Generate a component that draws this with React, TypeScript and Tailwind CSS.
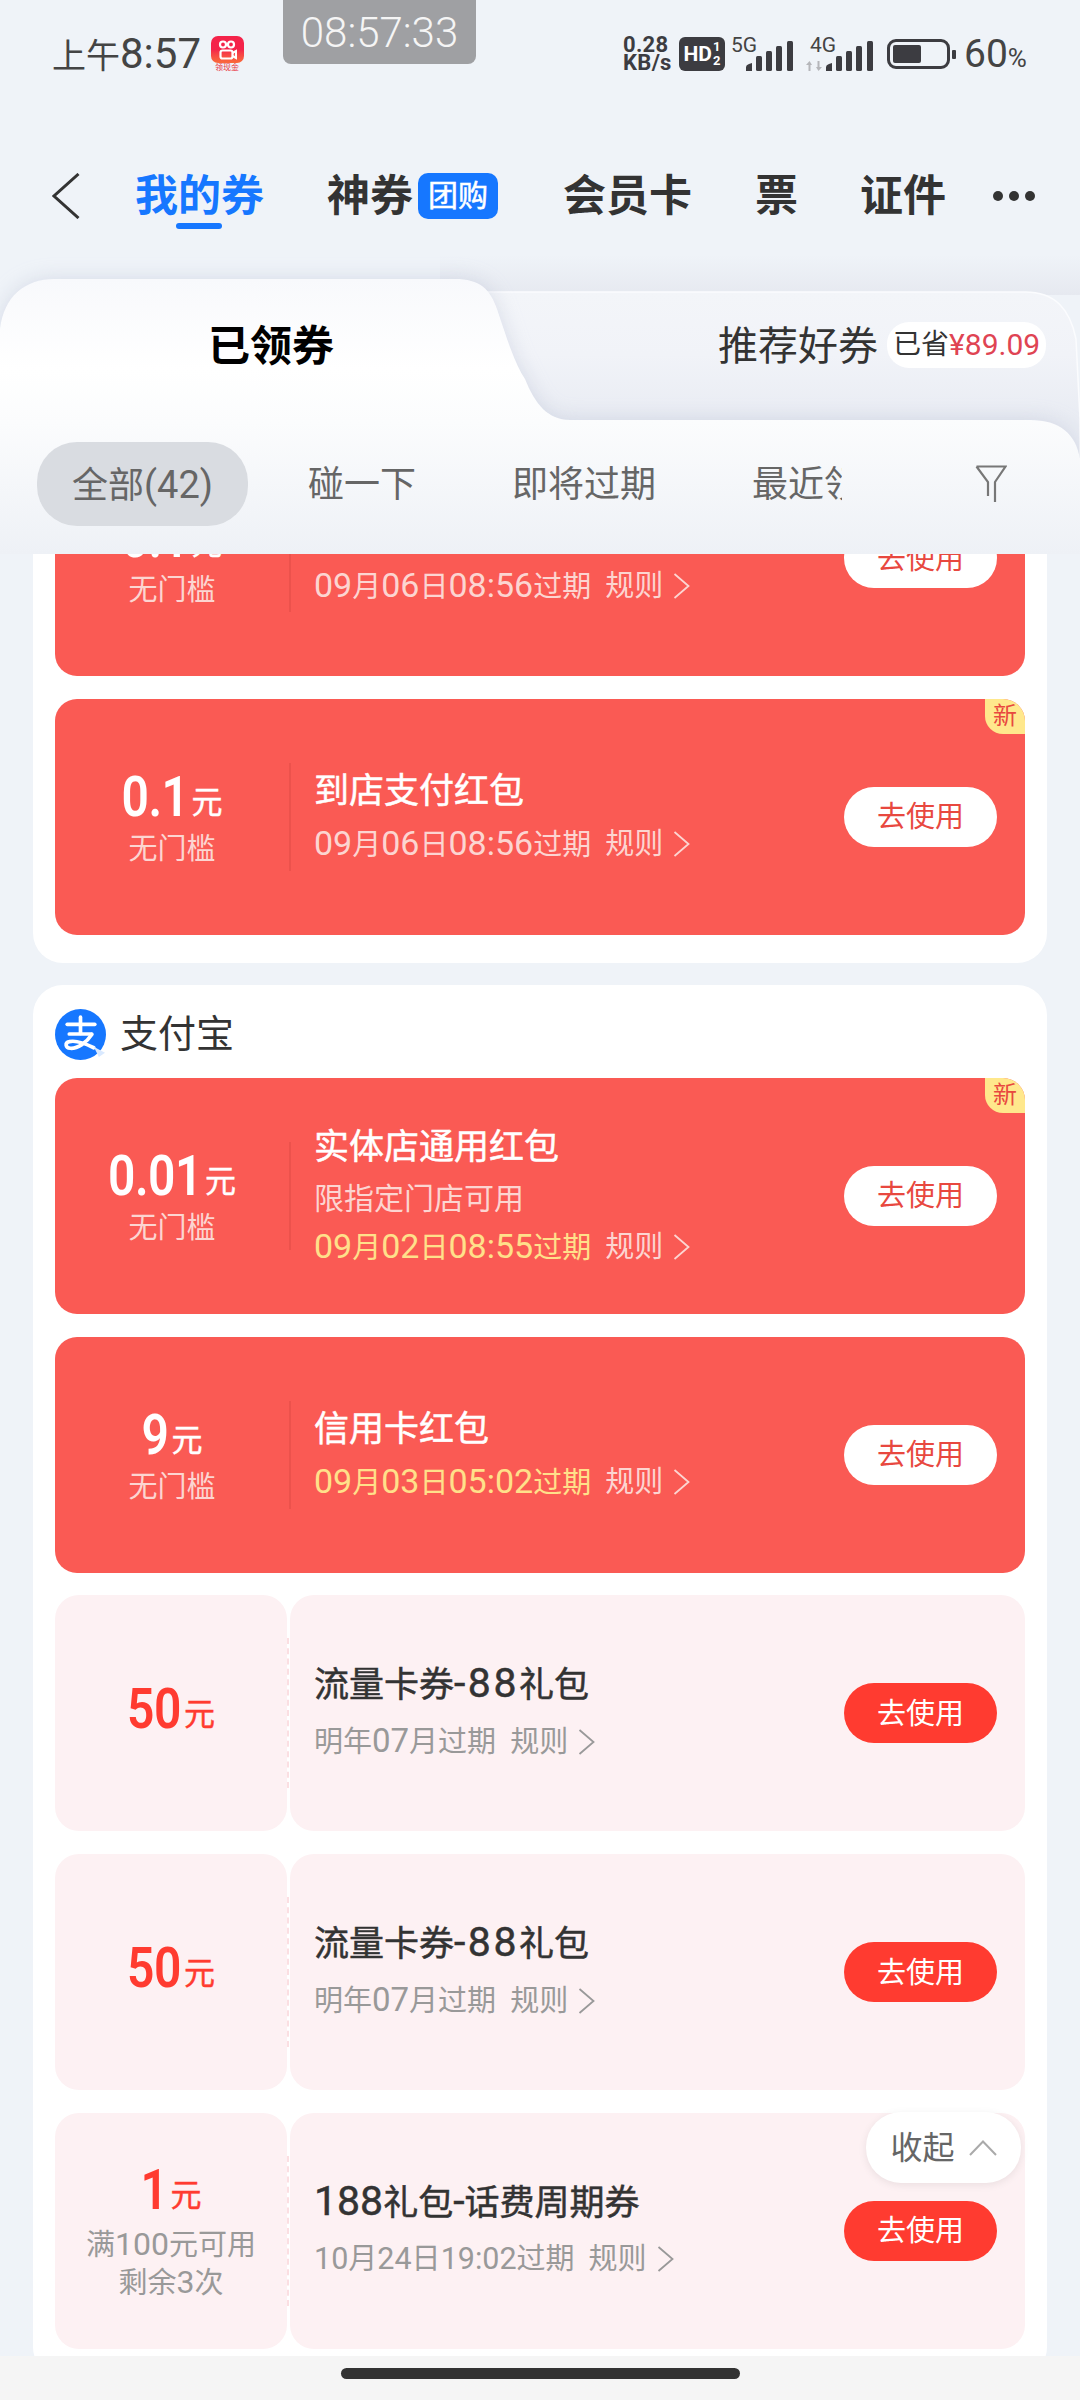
import React from "react";

type Coupon = {
  amount: string;
  sub?: string[];
  title: string;
  note?: string;
  date: string;
  isNew?: boolean;
  highlight?: boolean;
  titleDigits?: string;
  dateDigits?: string;
};

// digits in the reference run about 1.2x the size of the Chinese next to them
function Mixed({ text, digitClass }: { text: string; digitClass: string }) {
  const parts = text.split(/([0-9:.\-()¥]+)/);
  return (
    <>
      {parts.map((part, i) =>
        i % 2 === 1 ? (
          <span key={i} className={digitClass}>
            {part}
          </span>
        ) : (
          part
        )
      )}
    </>
  );
}

function Chevron({ className }: { className?: string }) {
  return (
    <svg viewBox="0 0 17 26" className={className} fill="none" stroke="currentColor" strokeWidth="1.8">
      <path d="M1.5 1 L15.5 13 L1.5 25" />
    </svg>
  );
}

function SignalBars({ className }: { className?: string }) {
  return (
    <svg viewBox="0 0 47 30" className={className} fill="#3c3c41">
      <path d="M0 30 V26 Q0 24 3 23 L6 22 V30 Z" />
      <rect x="10" y="15" width="6" height="15" rx="1.5" />
      <rect x="20" y="10" width="6" height="20" rx="1.5" />
      <rect x="30" y="5" width="6" height="25" rx="1.5" />
      <rect x="41" y="0" width="6" height="30" rx="1.5" />
    </svg>
  );
}

function AppBadge() {
  return (
    <div className="ml-[8px] w-[34px] flex flex-col items-center">
      <div className="w-[33px] h-[27px] rounded-[7px] bg-gradient-to-b from-[#f4234a] via-[#f4234a] to-[#fa6a3a] flex items-center justify-center">
        <svg viewBox="0 0 20 20" className="w-[20px] h-[22px]" fill="none" stroke="#fff" strokeWidth="2.2">
          <circle cx="6" cy="4.5" r="3" />
          <circle cx="14" cy="4.5" r="3" />
          <rect x="3.5" y="10.5" width="12" height="8" rx="2" />
          <path d="M15.5 13 L19 11 V18 L15.5 16" />
        </svg>
      </div>
      <span className="mt-[1px] h-[8px] text-[8px] leading-[8px] text-[#e8323c] whitespace-nowrap">领现金</span>
    </div>
  );
}

function StatusBar() {
  return (
    <div className="h-[108px] flex items-center pl-[52px] text-[#444]">
      <span className="text-[34px] leading-none w-[150px] whitespace-nowrap">
        <Mixed text="上午8:57" digitClass="text-[42px]" />
      </span>
      <AppBadge />
      <div className="ml-[379px] w-[50px] text-[22px] leading-[18px] font-bold text-[#3c3c41] flex flex-col tracking-[0.3px]">
        <span>0.28</span>
        <span>KB/s</span>
      </div>
      <div className="ml-[6px] w-[46px] h-[34px] rounded-[6px] bg-[#3c3c41] text-white flex items-center justify-center font-bold">
        <span className="text-[21px] leading-none">HD</span>
        <span className="flex flex-col text-[13px] leading-[14px] ml-[1px]">
          <span>1</span>
          <span>2</span>
        </span>
      </div>
      <div className="ml-[6px] w-[62px] h-[34px] relative">
        <span className="absolute left-0 top-0 text-[21px] leading-[16px]">5G</span>
        <SignalBars className="absolute right-0 bottom-0 w-[47px] h-[30px]" />
      </div>
      <div className="ml-[13px] w-[67px] h-[34px] relative">
        <span className="absolute left-[4px] top-0 text-[21px] leading-[16px]">4G</span>
        <svg viewBox="0 0 16 10" className="absolute left-0 bottom-0 w-[16px] h-[10px]" fill="#b5b6ba">
          <path d="M0 4 L3.5 0 L6 4 H4.5 V10 H2.5 V4 Z" />
          <path d="M10 6 L12.5 10 L16 6 H13.5 V0 H11.5 V6 Z" />
        </svg>
        <SignalBars className="absolute right-0 bottom-0 w-[47px] h-[30px]" />
      </div>
      <div className="ml-[14px] w-[63px] h-[30px] border-[3px] border-[#3c3c41] rounded-[9px] p-[3px] flex">
        <div className="w-[28px] bg-[#3c3c41] rounded-[2px]" />
      </div>
      <div className="ml-[2px] w-[4px] h-[9px] bg-[#3c3c41] rounded-[1px]" />
      <span className="ml-[8px] text-[39px] leading-none whitespace-nowrap">
        60<span className="text-[26px]">%</span>
      </span>
    </div>
  );
}

function NavBar() {
  return (
    <div className="h-[56px] mt-[60px] mb-[55px] flex items-center text-[43px] leading-none font-bold text-[#333] whitespace-nowrap">
      <svg viewBox="0 0 28 46" className="ml-[52px] w-[28px] h-[46px]" fill="none" stroke="#333" strokeWidth="3">
        <path d="M26.5 1 L2 23 L26.5 45" />
      </svg>
      <div className="ml-[55px] w-[129px] relative text-[#1677ff]">
        我的券
        <div className="absolute left-[41px] top-[48px] w-[46px] h-[6px] rounded-[3px] bg-[#1677ff]" />
      </div>
      <span className="ml-[63px] w-[86px]">神券</span>
      <span className="ml-[5px] w-[80px] h-[46px] rounded-[10px] bg-[#1677ff] text-white text-[30px] font-normal [-webkit-text-stroke:0.5px_#fff] flex items-center justify-center">团购</span>
      <span className="ml-[65px] w-[129px]">会员卡</span>
      <span className="ml-[63px] w-[43px]">票</span>
      <span className="ml-[62px] w-[86px]">证件</span>
      <div className="ml-[47px] flex gap-[6px]">
        <div className="w-[10px] h-[10px] rounded-full bg-[#333]" />
        <div className="w-[10px] h-[10px] rounded-full bg-[#333]" />
        <div className="w-[10px] h-[10px] rounded-full bg-[#333]" />
      </div>
    </div>
  );
}

function TabPanel() {
  return (
    <div className="relative h-[275px] shrink-0">
      <svg viewBox="0 -24 1080 299" className="absolute left-0 -top-[24px] w-[1080px] h-[299px]">
        <defs>
          <linearGradient id="topShade" x1="0" y1="0" x2="0" y2="1">
            <stop offset="0" stopColor="#eff3f8" />
            <stop offset="1" stopColor="#e6e9f0" />
          </linearGradient>
          <linearGradient id="rightTab" x1="0" y1="0" x2="0" y2="1">
            <stop offset="0" stopColor="#f3f5f9" />
            <stop offset="0.24" stopColor="#f1f3f8" />
            <stop offset="0.48" stopColor="#e9ecf3" />
          </linearGradient>
          <linearGradient id="leftTab" x1="0" y1="0" x2="0" y2="1">
            <stop offset="0" stopColor="#f8f9fc" />
            <stop offset="0.33" stopColor="#ffffff" />
            <stop offset="0.52" stopColor="#fbfcfd" />
            <stop offset="1" stopColor="#eef1f6" />
          </linearGradient>
        </defs>
        <rect x="440" y="-24" width="640" height="40" fill="url(#topShade)" />
        <path
          d="M450 13 L1025 13 C1055 13 1070 30 1076 60 L1080 140 L1080 275 L450 275 Z"
          fill="url(#rightTab)"
          stroke="#fbfcfe"
          strokeWidth="1.5"
        />
        <path
          className="drop-shadow-[0_0_10px_rgba(165,175,200,0.35)]"
          d="M0 50 C4 18 24 0 55 0 L455 0 C480 0 490 10 497 30 C507 60 515 85 525 100 C535 125 548 141 570 141 L1030 141 C1060 141 1076 155 1080 180 L1080 275 L0 275 Z"
          fill="url(#leftTab)"
        />
      </svg>
      <div className="relative h-[132px] flex items-center">
        <span className="ml-[208px] w-[510px] pt-[3px] text-[42px] leading-none font-bold text-black">已领券</span>
        <span className="pt-[3px] text-[40px] leading-none text-[#333] whitespace-nowrap">推荐好券</span>
        <div className="ml-[9px] w-[159px] h-[46px] rounded-[22px] bg-white flex items-center pl-[6px] whitespace-nowrap">
          <span className="text-[28px] leading-none text-[#333]">已省</span>
          <span className="text-[30px] leading-none text-[#df4453]">¥89.09</span>
        </div>
      </div>
      <div className="relative mt-[31px] h-[84px] flex items-center text-[36px] leading-none text-[#666] whitespace-nowrap">
        <div className="ml-[37px] w-[805px] overflow-hidden flex items-center">
          <div className="w-[211px] h-[84px] pt-[2px] rounded-[40px] bg-[#d9dce1] flex items-center justify-center shrink-0">
            <span>
              <Mixed text="全部(42)" digitClass="text-[38px]" />
            </span>
          </div>
          <span className="ml-[60px] pt-[2px] shrink-0">碰一下</span>
          <span className="ml-[96px] pt-[2px] shrink-0">即将过期</span>
          <span className="ml-[96px] pt-[2px] shrink-0">最近领取</span>
        </div>
        <svg viewBox="0 0 32 38" className="ml-[133px] w-[32px] h-[38px]" fill="none" stroke="#777" strokeWidth="2.2">
          <path d="M1.5 1.5 H30.5 L20 17 V37 M1.5 1.5 L13 17 V31" />
        </svg>
      </div>
    </div>
  );
}

function UseButton({ light }: { light: boolean }) {
  return (
    <div
      className={
        light
          ? "w-[153px] h-[60px] pt-[2px] rounded-[30px] bg-white text-[#e8483f] text-[29px] leading-none flex items-center justify-center shrink-0"
          : "w-[153px] h-[60px] pt-[2px] rounded-[30px] bg-[#ff3b30] text-white text-[29px] leading-none flex items-center justify-center shrink-0"
      }
    >
      去使用
    </div>
  );
}

function Amount({ value, className }: { value: string; className: string }) {
  return (
    <div className={className}>
      <span className="inline-block scale-y-[1.16] font-semibold text-[48px] leading-[56px] tracking-[-0.5px]">{value}</span>
      <span className="ml-[3px] text-[31px] [-webkit-text-stroke:0.4px_currentColor]">元</span>
    </div>
  );
}

function RedCoupon({ coupon }: { coupon: Coupon }) {
  return (
    <div className="relative h-[236px] rounded-[22px] bg-[#fa5a54] flex items-center overflow-hidden">
      {coupon.isNew && (
        <div className="absolute right-0 top-0 w-[40px] h-[35px] rounded-bl-[18px] bg-[#ffe88c] text-[#e8483f] text-[24px] leading-none flex items-center justify-center">
          新
        </div>
      )}
      <div className="w-[234px] pt-[3px] flex flex-col items-center text-white">
        <Amount value={coupon.amount} className="h-[56px] flex items-baseline" />
        <div className="mt-[5px] text-[29px] leading-[38px] text-[#fcd5d1]">无门槛</div>
      </div>
      <div className="w-[2px] h-[108px] bg-[#ec524c]" />
      <div className="ml-[23px] flex-1 flex flex-col">
        <div className="text-[35px] leading-[46px] text-white [-webkit-text-stroke:0.5px_#fff]">{coupon.title}</div>
        {coupon.note && <div className="mt-[9px] text-[30px] leading-[38px] text-[#fcd5d1]">{coupon.note}</div>}
        <div
          className={
            coupon.highlight
              ? "mt-[9px] flex items-center text-[29px] leading-[38px] text-[#ffe08a] whitespace-nowrap"
              : "mt-[9px] flex items-center text-[29px] leading-[38px] text-[#fcd5d1] whitespace-nowrap"
          }
        >
          <span>
            <Mixed text={coupon.date} digitClass="text-[34px]" />
          </span>
          <span className="ml-[14px] text-[#fcd5d1]">规则</span>
          <Chevron className="ml-[10px] w-[17px] h-[26px] text-[#fcd5d1]" />
        </div>
      </div>
      <div className="mr-[28px]">
        <UseButton light />
      </div>
    </div>
  );
}

function PinkCoupon({ coupon }: { coupon: Coupon }) {
  return (
    <div className="h-[236px] flex">
      <div
        className={
          coupon.sub
            ? "w-[232px] rounded-[24px] bg-[#fdf1f3] flex flex-col items-center justify-center pt-[3px]"
            : "w-[232px] rounded-[24px] bg-[#fdf1f3] flex flex-col items-center justify-center pb-[8px]"
        }
      >
        <Amount value={coupon.amount} className="h-[56px] flex items-baseline text-[#ff3b30]" />
        {coupon.sub && (
          <div className="mt-[8px] text-[29px] leading-[37px] text-[#999] text-center whitespace-nowrap">
            {coupon.sub.map((line) => (
              <div key={line}>
                <Mixed text={line} digitClass="text-[32px]" />
              </div>
            ))}
          </div>
        )}
      </div>
      <div className="w-[3px] flex items-center">
        <div className="h-[150px] w-0 border-l-[2px] border-dashed border-[#fbdfe2]" />
      </div>
      <div className="flex-1 rounded-[24px] bg-[#fdf1f3] flex items-center">
        <div className="ml-[24px] flex-1 flex flex-col pb-[5px]">
          <div className="text-[35px] leading-[46px] text-[#333] [-webkit-text-stroke:0.5px_#333] whitespace-nowrap">
            <Mixed text={coupon.title} digitClass={coupon.titleDigits ?? "text-[41px]"} />
          </div>
          <div className="mt-[13px] flex items-center text-[29px] leading-[38px] text-[#999] whitespace-nowrap">
            <span>
              <Mixed text={coupon.date} digitClass={coupon.dateDigits ?? "text-[33px]"} />
            </span>
            <span className="ml-[14px]">规则</span>
            <Chevron className="ml-[10px] w-[17px] h-[26px]" />
          </div>
        </div>
        <div className="mr-[28px]">
          <UseButton light={false} />
        </div>
      </div>
    </div>
  );
}

function AlipayLogo() {
  return (
    <svg viewBox="0 0 50 50" className="w-[51px] h-[51px] shrink-0">
      <circle cx="25" cy="25" r="25" fill="#1677ff" />
      <g fill="none" stroke="#fff" strokeWidth="3.6" strokeLinecap="round">
        <path d="M12 15 H39" />
        <path d="M25 8 V24" />
        <path d="M14 24.5 H36" />
        <path d="M36 25 C31 33 22 39 15 38.5 C10 38 9.5 33 14 32 C20 30.5 30 34 38 38" />
      </g>
      <path d="M38 37 L49 43 L43 47 Z" fill="#d9e9ff" />
    </svg>
  );
}

const firstGroup: Coupon[] = [
  { amount: "0.1", title: "到店支付红包", date: "09月06日08:56过期" },
  { amount: "0.1", title: "到店支付红包", date: "09月06日08:56过期", isNew: true },
];

const redGroup: Coupon[] = [
  { amount: "0.01", title: "实体店通用红包", note: "限指定门店可用", date: "09月02日08:55过期", isNew: true, highlight: true },
  { amount: "9", title: "信用卡红包", date: "09月03日05:02过期", highlight: true },
];

const pinkGroup: Coupon[] = [
  { amount: "50", title: "流量卡券-88礼包", date: "明年07月过期", titleDigits: "text-[41px] tracking-[2.5px]" },
  { amount: "50", title: "流量卡券-88礼包", date: "明年07月过期", titleDigits: "text-[41px] tracking-[2.5px]" },
  {
    amount: "1",
    sub: ["满100元可用", "剩余3次"],
    title: "188礼包-话费周期券",
    date: "10月24日19:02过期",
    dateDigits: "text-[30.5px]",
  },
];

export default function App() {
  return (
    <div className="relative w-[1080px] h-[2400px] overflow-hidden flex flex-col bg-[#eff3f8] font-['Roboto','Noto_Sans_CJK_SC',sans-serif]">
      <StatusBar />
      <div className="absolute left-[283px] top-0 w-[193px] h-[64px] pt-[2px] rounded-b-[8px] bg-[#9fa0a3] text-[#f5f5f5] text-[42px] leading-none font-light flex items-center justify-center">
        08:57:33
      </div>
      <NavBar />
      <TabPanel />

      <div className="flex-1 overflow-hidden px-[33px]">
        <div className="-mt-[114px] rounded-[30px] bg-white px-[22px] pb-[28px] flex flex-col gap-[22.75px]">
          {firstGroup.map((coupon, i) => (
            <RedCoupon key={i} coupon={coupon} />
          ))}
        </div>
        <div className="mt-[22px] rounded-[30px] bg-white px-[22px] pb-[28px]">
          <div className="h-[93px] pt-[6px] flex items-center">
            <AlipayLogo />
            <span className="ml-[14px] text-[38px] leading-none text-[#333]">支付宝</span>
          </div>
          <div className="flex flex-col gap-[22.75px]">
            {redGroup.map((coupon, i) => (
              <RedCoupon key={i} coupon={coupon} />
            ))}
            {pinkGroup.map((coupon, i) => (
              <PinkCoupon key={i} coupon={coupon} />
            ))}
          </div>
        </div>
      </div>

      <div className="absolute right-[59px] bottom-[217px] w-[155px] h-[71px] rounded-[35px] bg-white shadow-[0_2px_8px_rgba(0,0,0,0.08)] flex items-center justify-center text-[32px] leading-none text-[#666]">
        收起
        <svg viewBox="0 0 28 16" className="ml-[14px] w-[28px] h-[16px]" fill="none" stroke="#aaa" strokeWidth="2">
          <path d="M1 15 L14 1.5 L27 15" />
        </svg>
      </div>

      <div className="h-[44px] shrink-0 bg-[#f5f5f5] flex items-center justify-center pb-[10px]">
        <div className="w-[399px] h-[11px] rounded-full bg-[#333]" />
      </div>
    </div>
  );
}
